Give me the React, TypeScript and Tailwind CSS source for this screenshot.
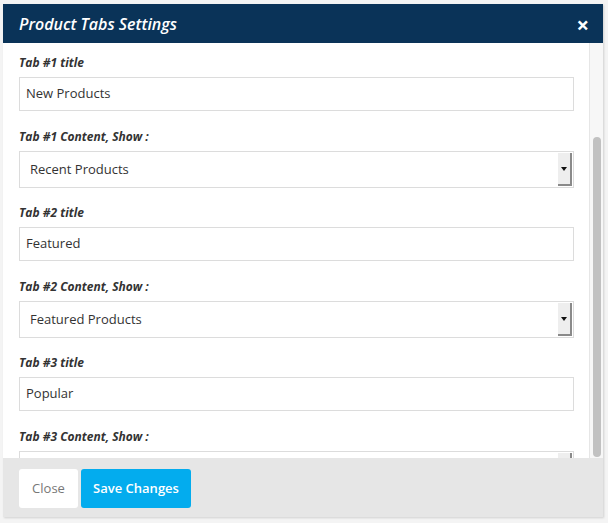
import React from "react";

type Field =
  | { kind: "text"; label: string; value: string }
  | { kind: "select"; label: string; value: string };

const FIELDS: Field[] = [
  { kind: "text", label: "Tab #1 title", value: "New Products" },
  { kind: "select", label: "Tab #1 Content, Show :", value: "Recent Products" },
  { kind: "text", label: "Tab #2 title", value: "Featured" },
  { kind: "select", label: "Tab #2 Content, Show :", value: "Featured Products" },
  { kind: "text", label: "Tab #3 title", value: "Popular" },
  // last select sits under the footer, its text is not visible
  { kind: "select", label: "Tab #3 Content, Show :", value: "" },
];

function SelectBox({ value }: { value: string }) {
  return (
    <div className="flex h-[37px] items-stretch border border-[#dcdcdc] bg-white">
      <div className="flex flex-1 items-center pl-[10px] text-[13px] text-[#333]">{value}</div>
      <div className="my-px mr-px flex w-[14px] items-center justify-center border-r-2 border-b-2 border-[#8a8a8a] bg-[#eeeeee]">
        <svg width="6" height="4" viewBox="0 0 6 4">
          <path d="M0 0h6L3 4z" fill="#111" />
        </svg>
      </div>
    </div>
  );
}

function TextBox({ value }: { value: string }) {
  return (
    <div className="flex h-[34px] items-center border border-[#dcdcdc] bg-white pl-[6px] text-[13px] text-[#333]">
      {value}
    </div>
  );
}

export default function App() {
  return (
    <div
      className="h-[523px] w-[608px] overflow-hidden bg-[#f4f4f4] pt-[4px] pl-[3px]"
      style={{ fontFamily: '"Open Sans", "Liberation Sans", sans-serif' }}
    >
      <div className="flex h-[513px] w-[600px] flex-col bg-white shadow-[1px_1px_2px_rgba(0,0,0,0.15)]">
        <div className="flex h-[39px] items-center justify-between bg-[#0a3358] pl-[16px] pr-[14px]">
          <span className="text-[16px] font-semibold italic text-white">Product Tabs Settings</span>
          <span className="text-[22px] font-bold leading-none text-white">×</span>
        </div>

        <div className="flex h-[415px] overflow-hidden">
          <div className="flex-1 pt-[11px] pl-[16px] pr-[15px]">
            {FIELDS.map((f) => (
              <div key={f.label} className={f.kind === "text" ? "mb-[17px]" : "mb-[16px]"}>
                <div className="mb-[6px] text-[12px] leading-[17px] font-bold italic text-[#333]">
                  {f.label}
                </div>
                {f.kind === "text" ? <TextBox value={f.value} /> : <SelectBox value={f.value} />}
              </div>
            ))}
          </div>
          <div className="w-[14px] border-l border-[#e6e6e6] bg-[#f7f7f7] pt-[94px] pl-[3px]">
            <div className="h-[320px] w-[8px] rounded-full bg-[#c1c1c1]" />
          </div>
        </div>

        <div className="flex flex-1 items-center gap-[3px] bg-[#e6e6e6] pt-[2px] pl-[16px]">
          <button className="h-[39px] w-[59px] rounded-[3px] bg-white text-[13px] text-[#777]">Close</button>
          <button className="h-[39px] w-[110px] rounded-[3px] bg-[#03acee] text-[13px] font-semibold text-white">
            Save Changes
          </button>
        </div>
      </div>
    </div>
  );
}
